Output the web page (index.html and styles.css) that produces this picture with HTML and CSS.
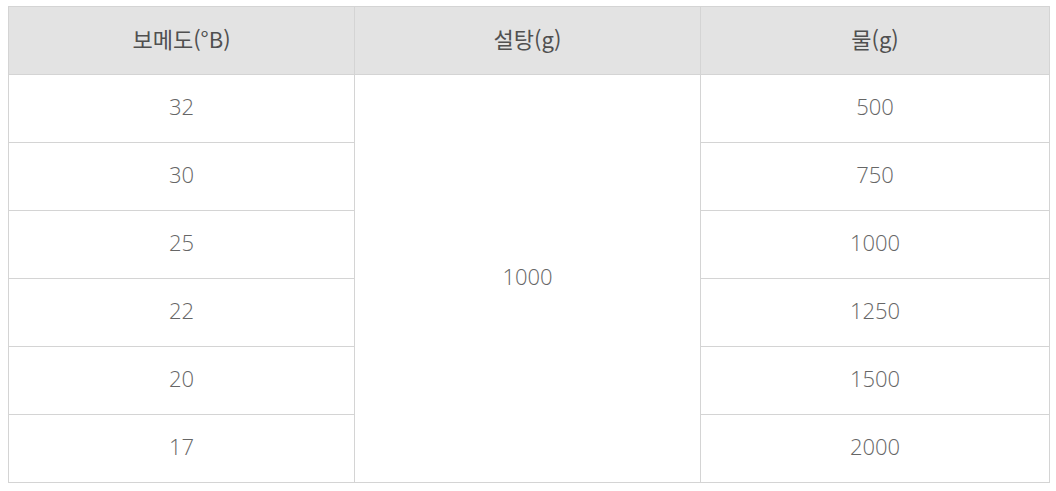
FILE: index.html
```html
<!DOCTYPE html>
<html lang="ko">
<head>
<meta charset="utf-8">
<link rel="stylesheet" href="styles.css">
</head>
<body>
<table class="sugar-table">
  <colgroup>
    <col class="col-a">
    <col class="col-b">
    <col class="col-c">
  </colgroup>
  <thead>
    <tr>
      <th>보메도(°B)</th>
      <th>설탕(g)</th>
      <th>물(g)</th>
    </tr>
  </thead>
  <tbody>
    <tr><td>32</td><td rowspan="6">1000</td><td>500</td></tr>
    <tr><td>30</td><td>750</td></tr>
    <tr><td>25</td><td>1000</td></tr>
    <tr><td>22</td><td>1250</td></tr>
    <tr><td>20</td><td>1500</td></tr>
    <tr><td>17</td><td>2000</td></tr>
  </tbody>
</table>
</body>
</html>
```

FILE: styles.css
```css
html, body {
  margin: 0;
  padding: 0;
  background: #ffffff;
}
body {
  padding: 6px 7px 0 8px;
  font-family: "Open Sans", "Noto Sans CJK KR", sans-serif;
}
.sugar-table {
  width: 1041px;
  border-collapse: collapse;
  table-layout: fixed;
}
.col-a { width: 346px; }
.col-b { width: 346px; }
.col-c { width: 349px; }
.sugar-table th,
.sugar-table td {
  border: 1px solid #d4d4d4;
  height: 61px;
  padding: 0 0 6px;
  text-align: center;
  vertical-align: middle;
  font-size: 22px;
  line-height: 1;
}
.sugar-table th {
  background: #e3e3e3;
  color: #505050;
  font-weight: 400;
  font-family: "Noto Sans CJK KR", "Open Sans", sans-serif;
}
.sugar-table td {
  color: #666666;
  font-weight: 300;
}
```
